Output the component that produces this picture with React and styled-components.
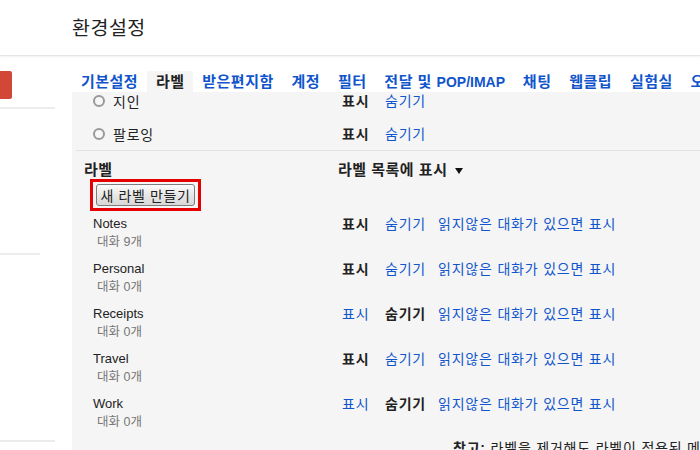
import styled, { createGlobalStyle } from "styled-components";

const GlobalStyle = createGlobalStyle`
  html, body {
    margin: 0;
    height: 100%;
    overflow: hidden;
    background: #fff;
  }
  body {
    font-family: "Liberation Sans", "Noto Sans CJK KR", sans-serif;
    font-size: 14px;
    color: #222;
  }
`;

const Page = styled.div`
  display: flex;
  flex-direction: column;
  height: 450px;
  width: 700px;
  overflow: hidden;
`;

const Header = styled.header`
  height: 55px;
  flex: none;
  border-bottom: 1px solid #e5e5e5;
  box-shadow: 0 1px 2px rgba(0, 0, 0, 0.06);
  position: relative;
  z-index: 1;
`;

const Title = styled.h1`
  margin: 0;
  padding-left: 72px;
  font-size: 19.5px;
  font-weight: normal;
  letter-spacing: 0.5px;
  line-height: 56px;
  color: #222;
`;

const Body = styled.div`
  flex: 1;
  display: flex;
  min-height: 0;
`;

const Sidebar = styled.aside`
  width: 72px;
  flex: none;
  display: flex;
  flex-direction: column;
`;

const Compose = styled.div`
  width: 12px;
  height: 28px;
  margin-top: 15px;
  background: #d14836;
  border-radius: 0 2px 2px 0;
`;

const SideRule = styled.div`
  width: ${(p) => p.$w}px;
  height: 2px;
  margin-top: ${(p) => p.$gap}px;
  background: #ececec;
`;

const Main = styled.main`
  flex: 1;
  display: flex;
  flex-direction: column;
  min-width: 0;
`;

const Tabs = styled.nav`
  height: 36px;
  flex: none;
  display: flex;
  align-items: flex-end;
  white-space: nowrap;
  overflow: hidden;
`;

const Tab = styled.span`
  height: 21px;
  line-height: 21px;
  padding: 0 8.9px;
  font-size: 15px;
  letter-spacing: 0.5px;
  font-weight: bold;
  color: ${(p) => (p.$active ? "#222" : "#15c")};
  background: ${(p) => (p.$active ? "#f5f5f5" : "transparent")};
`;

const Latin = styled.span`
  font-size: 14px;
  letter-spacing: 0;
`;

const Panel = styled.section`
  flex: 1;
  background: #f5f5f5;
  overflow: hidden;
`;

const Content = styled.div`
  margin-top: -8px;
  padding-left: 12px;
`;

const Row = styled.div`
  display: grid;
  grid-template-columns: 254px 1fr;
  height: ${(p) => p.$h}px;
  align-items: ${(p) => (p.$top ? "start" : "center")};
`;

const SysName = styled.div`
  display: flex;
  align-items: center;
  gap: 8px;
  padding-left: 9px;
  letter-spacing: 0.8px;
`;

const Radio = styled.span`
  width: 8px;
  height: 8px;
  border: 2px solid #999;
  border-radius: 50%;
  background: #f7f7f7;
`;

const Divider = styled.hr`
  margin: 0 0 0 -8px;
  border: 0;
  border-top: 1px solid #e2e2e2;
`;

const HeadRow = styled.div`
  display: grid;
  grid-template-columns: 254px 1fr;
  padding-top: 10px;
  line-height: 18px;
  font-size: 15px;
  letter-spacing: 0.5px;
  font-weight: bold;
  color: #222;
`;

const Caret = styled.svg`
  margin-left: 8px;
  vertical-align: 1px;
`;

const Highlight = styled.div`
  display: inline-block;
  margin-left: 6px;
  padding: 2px 3px;
  border: 3px solid #e60000;
`;

const Button = styled.button`
  display: block;
  width: 99px;
  height: 22px;
  padding: 0;
  border: 1px solid #7d7d7d;
  border-radius: 3px;
  background: linear-gradient(#fbfbfb, #e6e6e6 55%, #d8d8d8);
  font-family: inherit;
  font-size: 14px;
  letter-spacing: 0.6px;
  color: #222;
`;

const LabelList = styled.div`
  margin-top: 4px;
`;

const NameCell = styled.div`
  padding-left: 9px;
  line-height: 18px;
`;

const Name = styled.div`
  font-size: 13px;
  color: #222;
`;

const Count = styled.div`
  padding-left: 4px;
  font-size: 12.5px;
  color: #777;
`;

const Actions = styled.div`
  display: flex;
  padding-left: 4px;
  line-height: 18px;
  letter-spacing: 0.8px;
  white-space: nowrap;
`;

const Act = styled.span`
  width: ${(p) => (p.$w ? `${p.$w}px` : "auto")};
  flex: none;
  font-weight: ${(p) => (p.$on ? "bold" : "normal")};
  color: ${(p) => (p.$on ? "#222" : "#15c")};
`;

const Note = styled.p`
  margin: 1px 0 0 369px;
  line-height: 14px;
  letter-spacing: 0.8px;
  white-space: nowrap;
  color: #222;
`;

const tabs = [
  "기본설정",
  "라벨",
  "받은편지함",
  "계정",
  "필터",
  "전달 및 |POP/IMAP",
  "채팅",
  "웹클립",
  "실험실",
  "오프라인",
];

const labels = [
  { name: "Notes", count: 9, show: "show" },
  { name: "Personal", count: 0, show: "show" },
  { name: "Receipts", count: 0, show: "hide" },
  { name: "Travel", count: 0, show: "show" },
  { name: "Work", count: 0, show: "hide" },
];

export default function App() {
  return (
    <>
      <GlobalStyle />
      <Page>
        <Header>
          <Title>환경설정</Title>
        </Header>
        <Body>
          <Sidebar>
            <Compose />
            <SideRule $w={55} $gap={8} />
            <SideRule $w={40} $gap={144} />
            <SideRule $w={55} $gap={185} />
          </Sidebar>
          <Main>
            <Tabs>
              {tabs.map((t) => {
                const [ko, en] = t.split("|");
                return (
                  <Tab key={t} $active={t === "라벨"}>
                    {ko}
                    {en && <Latin>{en}</Latin>}
                  </Tab>
                );
              })}
            </Tabs>
            <Panel>
              <Content>
                {["지인", "팔로잉"].map((s) => (
                  <Row key={s} $h={33}>
                    <SysName>
                      <Radio />
                      {s}
                    </SysName>
                    <Actions>
                      <Act $w={43} $on>
                        표시
                      </Act>
                      <Act>숨기기</Act>
                    </Actions>
                  </Row>
                ))}
                <Divider />
                <HeadRow>
                  <span>라벨</span>
                  <span>
                    라벨 목록에 표시
                    <Caret width="8" height="6" viewBox="0 0 8 6">
                      <path d="M0 0h8L4 6z" fill="#111" />
                    </Caret>
                  </span>
                </HeadRow>
                <Highlight>
                  <Button>새 라벨 만들기</Button>
                </Highlight>
                <LabelList>
                  {labels.map((l) => (
                    <Row key={l.name} $h={45} $top>
                      <NameCell>
                        <Name>{l.name}</Name>
                        <Count>대화 {l.count}개</Count>
                      </NameCell>
                      <Actions>
                        <Act $w={43} $on={l.show === "show"}>
                          표시
                        </Act>
                        <Act $w={53} $on={l.show === "hide"}>
                          숨기기
                        </Act>
                        <Act>읽지않은 대화가 있으면 표시</Act>
                      </Actions>
                    </Row>
                  ))}
                </LabelList>
                <Note>
                  <b>참고:</b> 라벨을 제거해도 라벨이 적용된 메일은 삭제되지 않습니다.
                </Note>
              </Content>
            </Panel>
          </Main>
        </Body>
      </Page>
    </>
  );
}
